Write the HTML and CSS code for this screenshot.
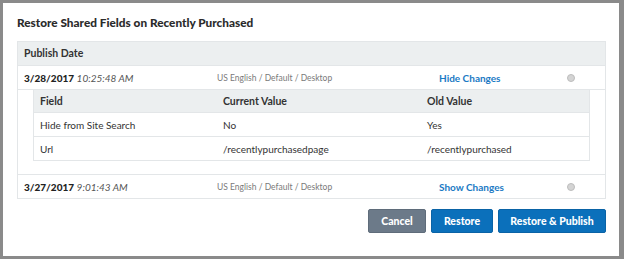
FILE: index.html
```html
<!DOCTYPE html>
<html>
<head>
	<title>Restore Shared Fields</title>
	<link rel="stylesheet" href="styles.css">
</head>
<body>
<div class="dialog">
	<h1>Restore Shared Fields on Recently Purchased</h1>
	<div class="history">
		<div class="row head">Publish Date</div>
		<div class="row">
			<span class="date"><b>3/28/2017</b> <i>10:25:48 AM</i></span>
			<span class="meta">US English / Default / Desktop</span>
			<a class="toggle">Hide Changes</a>
			<span class="radio"></span>
		</div>
		<div class="changes">
			<div class="fields">
				<div class="frow fhead">
					<span class="cell">Field</span>
					<span class="cell">Current Value</span>
					<span class="cell">Old Value</span>
				</div>
				<div class="frow">
					<span class="cell">Hide from Site Search</span>
					<span class="cell">No</span>
					<span class="cell">Yes</span>
				</div>
				<div class="frow">
					<span class="cell">Url</span>
					<span class="cell">/recentlypurchasedpage</span>
					<span class="cell">/recentlypurchased</span>
				</div>
			</div>
		</div>
		<div class="row last">
			<span class="date"><b>3/27/2017</b> <i>9:01:43 AM</i></span>
			<span class="meta">US English / Default / Desktop</span>
			<a class="toggle">Show Changes</a>
			<span class="radio"></span>
		</div>
	</div>
	<div class="actions">
		<button class="btn cancel">Cancel</button>
		<button class="btn">Restore</button>
		<button class="btn">Restore &amp; Publish</button>
	</div>
</div>
</body>
</html>
```

FILE: styles.css
```css
*{
	margin: 0;
	padding: 0;
	box-sizing: border-box;
}
body{
	background: #8a8a8a;
	padding: 3px 5px 3px 3px;
	font-family: "Lato", "Liberation Sans", sans-serif;
	color: #333;
}
.dialog{
	width: 616px;
	height: 253px;
	background: #fff;
	padding: 12px 13px 0 14px;
}
h1{
	font-size: 11.8px;
	font-weight: 900;
	line-height: 16px;
	color: #2b2b2b;
	margin-bottom: 10px;
}
.history{
	border: 1px solid #e3e6e8;
}
.row{
	display: grid;
	grid-template-columns: 193px 222px 1fr 8px;
	align-items: center;
	height: 24px;
	padding: 0 30px 0 6px;
	border-bottom: 1px solid #e3e6e8;
	font-size: 10px;
}
.row.last{
	border-bottom: none;
	height: 23px;
}
.row.head{
	display: block;
	line-height: 23px;
	background: #eceff0;
	font-weight: bold;
	font-size: 10.5px;
}
.date b{
	font-weight: 900;
	color: #222;
}
.date i{
	color: #555;
}
.meta{
	font-size: 8.5px;
	color: #7a7a7a;
}
.toggle{
	color: #1b7ac4;
	font-weight: bold;
	font-size: 10px;
	cursor: pointer;
}
.radio{
	width: 8px;
	height: 8px;
	border-radius: 50%;
	background: #d4d4d4;
	border: 1px solid #bdbdbd;
}
.changes{
	padding: 0 15px 13px 15px;
	border-bottom: 1px solid #e3e6e8;
}
.fields{
	border: 1px solid #e3e6e8;
	border-top: none;
}
.frow{
	display: grid;
	grid-template-columns: 183px 204px 1fr;
	align-items: center;
	height: 24px;
	padding-left: 6px;
	border-bottom: 1px solid #e3e6e8;
	font-size: 10px;
}
.frow .cell{
	color: #333;
}
.frow:last-child{
	border-bottom: none;
	height: 23px;
}
.frow.fhead{
	background: #eceff0;
	font-weight: bold;
	font-size: 10.5px;
	height: 23px;
}
.actions{
	display: flex;
	justify-content: flex-end;
	gap: 5px;
	margin-top: 10px;
}
.btn{
	height: 24px;
	padding: 0;
	border: 1px solid #0a63a6;
	border-radius: 2px;
	background: #0b70bb;
	color: #fff;
	font-family: inherit;
	font-size: 10.5px;
	font-weight: 900;
	white-space: nowrap;
	cursor: pointer;
}
.btn.cancel{
	background: #6c7a89;
	border-color: #5f6c7a;
	width: 58px;
}
.btn:nth-child(2){
	width: 62px;
}
.btn:nth-child(3){
	width: 108px;
}
```
